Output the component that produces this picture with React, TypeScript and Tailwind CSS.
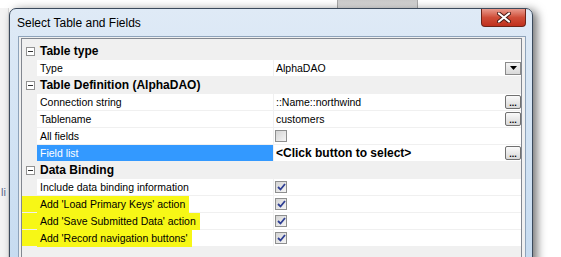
import type { ReactNode } from 'react'

function MinusBox() {
  return (
    <div className="w-[9px] h-[9px] border border-[#919191] bg-white flex items-center justify-center">
      <div className="w-[5px] h-px bg-[#333]" />
    </div>
  )
}

function EllipsisButton() {
  return (
    <div className="w-[16px] h-[14px] rounded-[2px] border border-[#707070] bg-gradient-to-b from-[#fafafa] to-[#d8d8d8] flex items-end justify-center text-[9px] font-bold leading-[9px] text-black">
      ...
    </div>
  )
}

function DropButton() {
  return (
    <div className="w-[16px] h-[13px] border border-[#8a8a8a] bg-gradient-to-b from-[#f4f4f4] to-[#d9d9d9] flex items-center justify-center">
      <svg width="7" height="4" viewBox="0 0 7 4">
        <path d="M0 0 H7 L3.5 4 Z" fill="#000" />
      </svg>
    </div>
  )
}

function CheckBox({ checked }: { checked?: boolean }) {
  return (
    <div className="-ml-px w-[12px] h-[12px] border border-[#8e8f8f] bg-gradient-to-br from-[#d4d4d4] to-[#f5f5f5] flex items-center justify-center">
      {checked && (
        <svg width="9" height="8" viewBox="0 0 9 8">
          <path d="M1 4 L3.5 6.5 L8 1" stroke="#2e3f94" strokeWidth="1.8" fill="none" />
        </svg>
      )}
    </div>
  )
}

function Category({ label }: { label: string }) {
  return (
    <div className="flex h-[16px] items-center">
      <div className="w-[14px] flex justify-center pl-[2px]">
        <MinusBox />
      </div>
      <div className="pl-[4px] text-[12px] font-bold leading-none text-black">{label}</div>
    </div>
  )
}

type PropProps = {
  label: string
  value?: ReactNode
  button?: ReactNode
  selected?: boolean
  marked?: boolean
}

function Prop({ label, value, button, selected, marked }: PropProps) {
  return (
    <div className="flex h-[16px] gap-px">
      <div className={marked ? 'w-[15px] -mr-px bg-[#f7f716]' : 'w-[14px]'} />
      <div
        className={
          'w-[236px] flex items-center whitespace-nowrap text-[10.5px] leading-none ' +
          (selected ? 'bg-[#3399ff] text-white' : 'bg-white text-black')
        }
      >
        {marked ? (
          <div className="h-[17px] flex items-center pl-[3px] pr-[4px] bg-[#f7f716]">{label}</div>
        ) : (
          <span className="pl-[3px]">{label}</span>
        )}
      </div>
      <div className="flex-1 bg-white flex items-center justify-between pl-[2px] text-[10.5px] leading-none text-black">
        <div className="flex items-center">{value}</div>
        {button}
      </div>
    </div>
  )
}

export default function App() {
  return (
    <div className="w-[561px] h-[257px] overflow-hidden bg-white flex flex-col font-['Liberation_Sans',Arial,sans-serif]">
      {/* window behind, peeking over the top */}
      <div className="h-[8px] flex shrink-0">
        <div className="w-[337px]" />
        <div className="w-[81px] bg-gradient-to-b from-[#c9c9c9] to-[#e4e4e4] border-x border-[#a8a8a8]" />
      </div>

      <div className="flex flex-1">
        <div className="w-[9px] bg-[#f3f3f3] border-r border-[#dadada] flex flex-col">
          <div className="h-[179px]" />
          <div className="text-[11px] text-[#5b6c8c] leading-none pl-[1px]">li</div>
        </div>

        <div className="w-[524px] h-[260px] border border-[#3b4a5c] rounded-t-[7px] bg-gradient-to-b from-[#dfeaf6] via-[#d2e3f4] to-[#c6dbf0] shadow-[4px_2px_10px_rgba(0,0,0,0.55)] flex flex-col">
          <div className="h-[27px] flex items-start justify-between shrink-0">
            <div className="pl-[7px] pt-[8px] text-[12px] leading-none text-black">Select Table and Fields</div>
            <div className="mr-[6px] w-[45px] h-[18px] rounded-b-[4px] border border-t-0 border-[#6e2418] bg-gradient-to-b from-[#e8998c] via-[#cf4d38] to-[#c0301d] flex items-center justify-center">
              <svg width="14" height="11" viewBox="0 0 14 11">
                <path d="M2 1.5 L12 9.5 M12 1.5 L2 9.5" stroke="#4a1a14" strokeWidth="4" strokeLinecap="round" />
                <path d="M2 1.5 L12 9.5 M12 1.5 L2 9.5" stroke="#fff" strokeWidth="2.2" strokeLinecap="round" />
              </svg>
            </div>
          </div>

          <div className="ml-[8px] mr-[6px] flex-1 border border-[#8ea3ba] bg-[#f0f0f0] pl-[2px] pr-[3px] pt-px">
            <div className="h-full border border-[#828790] bg-[#f0f0f0] pt-[4px] flex flex-col gap-px">
              <Category label="Table type" />
              <Prop label="Type" value="AlphaDAO" button={<DropButton />} />
              <Category label="Table Definition (AlphaDAO)" />
              <Prop label="Connection string" value="::Name::northwind" button={<EllipsisButton />} />
              <Prop label="Tablename" value="customers" button={<EllipsisButton />} />
              <Prop label="All fields" value={<CheckBox />} />
              <Prop
                label="Field list"
                selected
                value={<span className="text-[12px] font-bold">&lt;Click button to select&gt;</span>}
                button={<EllipsisButton />}
              />
              <Category label="Data Binding" />
              <Prop label="Include data binding information" value={<CheckBox checked />} />
              <Prop label="Add 'Load Primary Keys' action" value={<CheckBox checked />} marked />
              <Prop label="Add 'Save Submitted Data' action" value={<CheckBox checked />} marked />
              <Prop label="Add 'Record navigation buttons'" value={<CheckBox checked />} marked />
            </div>
          </div>
        </div>
      </div>
    </div>
  )
}
